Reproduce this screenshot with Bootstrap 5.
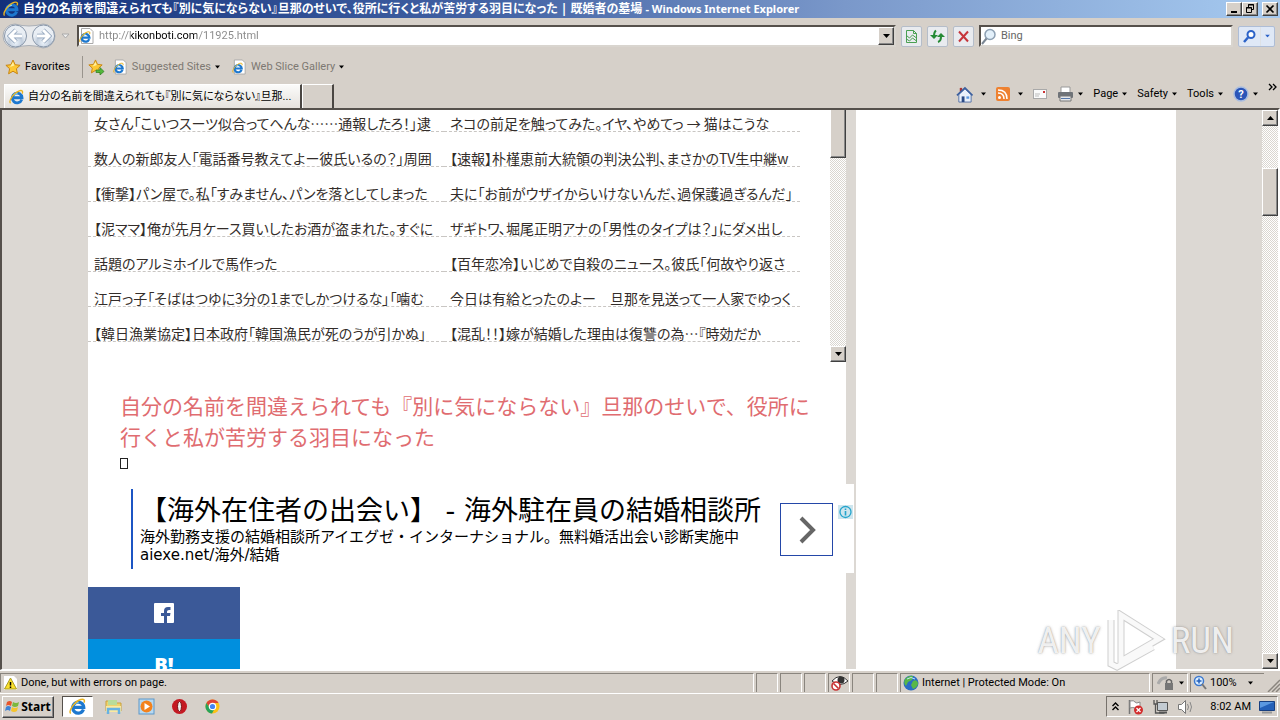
<!DOCTYPE html>
<html lang="ja">
<head>
<meta charset="utf-8">
<meta name="viewport" content="width=device-width, initial-scale=1">
<title>自分の名前を間違えられても『別に気にならない』旦那のせいで、役所に行くと私が苦労する羽目になった | 既婚者の墓場</title>
<link href="https://cdn.jsdelivr.net/npm/bootstrap@5.3.0/dist/css/bootstrap.min.css" rel="stylesheet">
<style>
:root{--face:#d6d0c9;--page:#dcd8d3;--ui:Roboto,"Noto Sans CJK JP",sans-serif}
body{font:11px/16px var(--ui);color:#000;background:var(--face)}
button{font:inherit;color:inherit;background:none;border:0;padding:0;display:inline-flex;align-items:center;justify-content:center}
a{color:inherit;text-decoration:none}
svg{display:block;flex:none}
.kana{font-feature-settings:"palt"}
.titlebar{height:18px;padding:0 2px 0 3px;color:#fff;font:700 12px/18px "Noto Sans","Noto Sans CJK JP",sans-serif;background:linear-gradient(90deg,#12307a,#4262a4 38%,#7a98ca 66%,#a6caf0)}
.titlebar .latin{font-size:11px}
.raised{background:var(--face);border:1px solid;border-color:#fff #404040 #404040 #fff;box-shadow:inset -1px -1px #888}
.winbtn{width:16px;height:14px}
.sunken{border:1px solid;border-color:#77726c #fff #fff #77726c}
.navrow{height:36px;padding:0 5px 0 2px;gap:5px}
.tools{gap:5px}
.field{height:22px;background:#fff;border:2px solid;border-color:#55504b #d9d5cf #d9d5cf #55504b}
.field input{border:0;outline:0;background:none;padding:0;min-width:0;font:inherit}
.addr-input{color:transparent!important;background:linear-gradient(90deg,#888 32px,#000 32px 98px,#888 98px) text!important;-webkit-background-clip:text!important}
.find input{color:#666}
.find input::placeholder{color:#666;opacity:1}
.dropbtn{width:16px;height:18px}
.toolbtn{width:21px;height:21px;background:#e9ebef;border:1px solid #b5bdc9;border-radius:2px}
.findbtn{height:21px;background:#dfe8f6;border:1px solid #aebdd6;border-radius:2px}
.favrow{height:26px;padding:0 5px}
.divider{width:1px;height:22px;margin:0 5px 0 12px;background:#99948d}
.muted{color:#7d7872}
.tabrow{height:28px;padding:0 3px 0 4px}
.tab-on{width:298px;height:25px;padding:0 4px;background:linear-gradient(#fbfbfa,#e6e2dd);border:1px solid #fff;border-right:2px solid #4a4642;justify-content:flex-start}
.tab-new{width:32px;height:25px;border:1px solid #fff;border-right:2px solid #4a4642;border-bottom:0}
.cmds{gap:10px}
.view{border:2px solid;border-color:#55504b #fff #fff #55504b;background:var(--page);border-bottom-width:1px}
.wrap{max-width:1088px;gap:10px}
.side{width:320px;background:#fff}
.feed{height:252px}
.feed ul{width:712px;padding-bottom:20px}
.feed li{height:35px;width:50%;padding:18px 0 0 6px;line-height:16px;font-family:"Noto Sans CJK JP",sans-serif;font-size:14px;color:#332d2a;border-bottom:1px dashed #c9c6c3;white-space:nowrap}
.track{width:16px;background:repeating-conic-gradient(#fff 0 25%,#dad6d0 0 50%) 0 0/2px 2px}
.thumb{width:16px;height:48px}
.gap-top{height:42px}
.arrow{width:16px;height:16px}
.post-head{padding:28px 0 0 32px}
.post-head h1{font:400 21px/31px "Noto Sans CJK JP",sans-serif;color:#e06c70;margin:0;width:700px}
.tofu{width:8px;height:11px;border:1px solid #222;margin-top:6px}
.promo{height:89px;margin:15px -8px 14px 32px;padding:5px 1px 0 11px;background:#fff}
.promo-body{border-left:2px solid #1c55c4;height:80px;padding:5px 0 0 7px;font:15px/18px "DejaVu Sans","Noto Sans CJK JP",sans-serif}
.promo-title{font-size:27px;line-height:34px}
.promo-go{width:53px;height:53px;border:1px solid #2447a8;margin:14px 5px 0 0}
.share a{width:152px;height:52px;display:flex;align-items:center;justify-content:center}
.fb{background:#3b5998}
.hb{background:#008fde;color:#fff;font:800 20px/20px "Open Sans",sans-serif}
.statusbar{height:24px;border-top:1px solid #fff;padding:2px 0 1px;border-bottom:1px solid #fff}
.pane{border-left:1px solid #8a857e;border-top:1px solid #8a857e;border-right:1px solid #fff;padding:0 2px;margin-right:2px;gap:3px}
.pane-s{width:22px}
.taskbar{height:26px;padding:1px 2px 2px}
.startbtn{width:52px;height:22px;font:700 12px/16px "Noto Sans",sans-serif;gap:1px}
.task-on{width:31px;height:21px;background:#fff;border:1px solid;border-color:#55504b #fff #fff #55504b}
.tray{height:21px;padding:0 2px 0 5px}
.watermark{right:46px;bottom:48px;gap:4px;color:#fffd;font:37px/60px "Roboto Condensed","Liberation Sans Narrow","Liberation Sans",sans-serif;text-shadow:0 0 3px #888a,0 0 1px #888a;pointer-events:none}
</style>
</head>
<body class="vh-100 d-flex flex-column overflow-hidden">
<svg width="0" height="0" class="position-absolute" aria-hidden="true">
 <defs>
  <symbol id="ie" viewBox="0 0 16 16"><path d="M13.600 10.800A5.200 5.200 0 1 1 13.900 8.800H5" fill="none" stroke="#1d78cf" stroke-width="3"/><path d="M4 6.600Q6 4.200 9 4.400" fill="none" stroke="#7fd0f8" stroke-width="1.200"/><path d="M1.600 14.600C-.8 12.400 5 3.400 11 1.400c3-1 4.200.6 3 3" fill="none" stroke="#e9b320" stroke-width="1.400"/></symbol>
  <symbol id="iepage" viewBox="0 0 16 16"><path d="M2.500.5h8.500l3 3v12h-11.500z" fill="#fff" stroke="#aaa"/><use href="#ie" x="0" y="3" width="12" height="12"/></symbol>
  <symbol id="dn" viewBox="0 0 7 4"><path d="M0 0h7L3.500 4z" fill="currentColor"/></symbol>
  <symbol id="star" viewBox="0 0 16 16"><path d="M8 1l2.100 4.700 5 .6-3.700 3.400 1 5.100L8 12.200l-4.400 2.600 1-5.100L.9 6.300l5-.6z" fill="#fdc835" stroke="#c98512"/><path d="M8 3l1.300 3.500L5 8z" fill="#fff0a0"/></symbol>
 </defs>
</svg>

<header>
 <div class="titlebar d-flex align-items-center">
  <svg width="16" height="16"><use href="#ie"/></svg>
  <span class="kana flex-grow-1 text-nowrap overflow-hidden ps-1">自分の名前を間違えられても『別に気にならない』旦那のせいで、役所に行くと私が苦労する羽目になった | 既婚者の墓場 <span class="latin">- Windows Internet Explorer</span></span>
  <button class="winbtn raised" aria-label="Minimize"><svg width="10" height="10"><path d="M2 8h6" stroke="#000" stroke-width="2"/></svg></button>
  <button class="winbtn raised me-1" aria-label="Restore"><svg width="10" height="10"><path d="M3.500 3V.5h5v5H7M3 1h6M1.500 3.500h5v5h-5zM1 4h6" fill="none" stroke="#000"/></svg></button>
  <button class="winbtn raised" aria-label="Close"><svg width="10" height="10"><path d="M1.500 1.500l7 7m0-7l-7 7" stroke="#000" stroke-width="1.700"/></svg></button>
 </div>

 <div class="navrow d-flex align-items-center">
  <svg width="70" height="28" viewBox="0 0 70 28" role="img" aria-label="Back and forward">
   <defs><radialGradient id="orb" cy=".8"><stop offset="0" stop-color="#edf4fb"/><stop offset=".6" stop-color="#c2cedd"/><stop offset="1" stop-color="#e9eef4"/></radialGradient></defs>
   <path d="M13 2Q27 6 41 2a12 12 0 0 1 0 24Q27 21 13 26a12 12 0 0 1 0-24z" fill="#e8eaed" stroke="#aaafb6"/>
   <circle cx="13.500" cy="14" r="11" fill="url(#orb)" stroke="#8795a8"/><circle cx="41.500" cy="14" r="11" fill="url(#orb)" stroke="#8795a8"/>
   <path d="M20 14H8m6-6l-6 6 6 6" fill="none" stroke="#8b9fb8" stroke-width="4.500"/><path d="M20 14H8m6-6l-6 6 6 6" fill="none" stroke="#fff" stroke-width="3"/>
   <path d="M35 14h12m-6-6l6 6-6 6" fill="none" stroke="#8b9fb8" stroke-width="4.500"/><path d="M35 14h12m-6-6l6 6-6 6" fill="none" stroke="#fff" stroke-width="3"/>
   <path d="M60 12h7l-3.500 4z" fill="#eee" stroke="#aaa"/>
  </svg>
  <label class="field d-flex align-items-center flex-grow-1">
   <svg width="16" height="16"><use href="#iepage"/></svg>
   <input class="addr-input flex-grow-1 ms-1" aria-label="Address" value="http://kikonboti.com/11925.html">
   <button class="dropbtn raised" aria-label="Show addresses"><svg width="7" height="4"><use href="#dn"/></svg></button>
  </label>
  <div class="tools d-flex">
   <button class="toolbtn" aria-label="Compatibility view"><svg width="15" height="15"><path d="M2.500 1.500h7l3 3v9h-10zM9.500 1.500v3h3M2.500 6.500l3 2.500 3-3 4 3M2.500 10l3 2 3-3 4 3" fill="none" stroke="#4aa052"/></svg></button>
   <button class="toolbtn" aria-label="Refresh"><svg width="15" height="15"><path d="M6 1.500Q4 3 4 7" fill="none" stroke="#268a35" stroke-width="2"/><path d="M0 6h8L4 10zM7 8h8L11 4z" fill="#268a35"/><path d="M11 8q0 4-3 5" fill="none" stroke="#268a35" stroke-width="2"/></svg></button>
   <button class="toolbtn" aria-label="Stop"><svg width="15" height="15"><path d="M3 2.500l9 10M12 2.500l-9 10" stroke="#c6353b" stroke-width="2"/></svg></button>
  </div>
  <label class="field find d-flex align-items-center">
   <svg class="me-1" width="16" height="17"><circle cx="9" cy="6.500" r="5" fill="#e3f0fa" stroke="#8da0b3" stroke-width="1.500"/><path d="M5.500 10.500L1 16" stroke="#7b8794" stroke-width="2"/></svg>
   <input style="width:230px" aria-label="Search" placeholder="Bing">
  </label>
  <div class="findbtn d-flex">
   <button class="px-1" aria-label="Search"><svg width="13" height="15"><circle cx="8" cy="5.500" r="3.500" fill="#fff" stroke="#2b62c8" stroke-width="2"/><path d="M5 8.500L1 13" stroke="#2b62c8" stroke-width="2.500"/></svg></button>
   <button class="border-start px-1" style="color:#2b62c8" aria-label="Search options"><svg width="5" height="4" viewBox="0 0 7 4"><use href="#dn"/></svg></button>
  </div>
 </div>

 <nav class="favrow d-flex align-items-center">
  <button><svg class="me-1" width="16" height="16"><use href="#star"/></svg>Favorites</button>
  <span class="divider"></span>
  <button aria-label="Add to favorites"><svg width="17" height="16"><use href="#star" width="15" height="15"/><path d="M8 11h4V8.500l4 4-4 3.500v-2.500H8z" fill="#54b83c" stroke="#2d7c1f" stroke-width=".7"/></svg></button>
  <button class="ms-2"><svg class="me-1" width="15" height="16"><use href="#iepage"/></svg><span class="muted">Suggested Sites</span><svg class="ms-1" width="5" height="4"><use href="#dn"/></svg></button>
  <button class="ms-2 ps-1"><svg class="me-1" width="15" height="16"><use href="#iepage"/></svg><span class="muted">Web Slice Gallery</span><svg class="ms-1" width="5" height="4"><use href="#dn"/></svg></button>
 </nav>

 <div class="tabrow d-flex">
  <button class="tab-on kana mt-1"><svg class="me-1" width="15" height="16"><use href="#ie"/></svg><span class="text-nowrap">自分の名前を間違えられても『別に気にならない』旦那...</span></button>
  <button class="tab-new mt-1" aria-label="New tab"></button>
  <div class="cmds d-flex align-items-center ms-auto">
   <button aria-label="Home"><svg width="17" height="17" viewBox="0 0 18 18"><path d="M4 2h2.500v4H4z" fill="#a33"/><path d="M3 9l6.500-6L16 9v8H3z" fill="#e9f0fa" stroke="#5573a8"/><path d="M1 10l8.500-8 8 8" fill="none" stroke="#3c5f9e" stroke-width="1.800"/><path d="M6 11h3v6H6z" fill="#2b4a85"/><path d="M11 11h3v2.500h-3z" fill="#5e9ae0"/></svg><svg class="ms-2" width="5" height="4"><use href="#dn"/></svg></button>
   <button aria-label="Feeds"><svg width="14" height="14" viewBox="0 0 14 14"><rect width="14" height="14" rx="2" fill="#ee8130"/><circle cx="3.500" cy="10.500" r="1.500" fill="#fff"/><path d="M2 6q6 0 6 6M2 3q9 0 9 9" fill="none" stroke="#fff" stroke-width="1.500"/></svg><svg class="ms-2" width="5" height="4"><use href="#dn"/></svg></button>
   <button aria-label="Read mail"><svg width="14" height="11"><rect x=".5" y=".5" width="13" height="9" fill="#fafafa" stroke="#a9a9a9"/><path d="M2 5h5M2 7h4" stroke="#bbb"/><path d="M10 2h2v2h-2z" fill="#c33"/></svg></button>
   <button aria-label="Print"><svg width="17" height="16"><path d="M4 1h9v6H4z" fill="#fff" stroke="#999"/><rect x="1" y="6" width="15" height="6" rx="1" fill="#6f7378"/><path d="M3 10h11v5H3z" fill="#e5e7ea" stroke="#777"/><path d="M4 12.500h9" stroke="#57a"/></svg><svg class="ms-1" width="5" height="4"><use href="#dn"/></svg></button>
   <button>Page<svg class="ms-1" width="5" height="4"><use href="#dn"/></svg></button>
   <button>Safety<svg class="ms-1" width="5" height="4"><use href="#dn"/></svg></button>
   <button>Tools<svg class="ms-1" width="5" height="4"><use href="#dn"/></svg></button>
   <button aria-label="Help"><svg width="16" height="16"><circle cx="8" cy="8" r="7" fill="#2b55b8" stroke="#a9bde0" stroke-width="1.500"/><text x="8" y="12" text-anchor="middle" font-size="11" font-weight="700" fill="#fff">?</text></svg><svg class="ms-1" width="5" height="4"><use href="#dn"/></svg></button>
   <button class="align-self-start" aria-label="More"><svg width="9" height="14"><path d="M1 4l3 3-3 3M5 4l3 3-3 3" fill="none" stroke="#000" stroke-width="1.300"/></svg></button>
  </div>
 </div>
</header>

<main class="view d-flex flex-grow-1 overflow-hidden">
 <div class="flex-grow-1 overflow-hidden">
  <div class="wrap d-flex mx-auto h-100">
   <article class="flex-grow-1 bg-white">
    <section class="feed d-flex overflow-hidden">
     <div class="flex-grow-1 d-flex flex-column justify-content-end">
      <ul class="kana list-unstyled d-flex flex-wrap mb-0">
       <li><a href="#">女さん「こいつスーツ似合ってへんな……通報したろ！」逮</a></li><li><a href="#">ネコの前足を触ってみた。イヤ、やめてっ → 猫はこうな</a></li>
       <li><a href="#">数人の新郎友人「電話番号教えてよー彼氏いるの？」周囲</a></li><li><a href="#">【速報】朴槿恵前大統領の判決公判、まさかのTV生中継w</a></li>
       <li><a href="#">【衝撃】パン屋で。私「すみません、パンを落としてしまった</a></li><li><a href="#">夫に「お前がウザイからいけないんだ、過保護過ぎるんだ」</a></li>
       <li><a href="#">【泥ママ】俺が先月ケース買いしたお酒が盗まれた。すぐに</a></li><li><a href="#">ザギトワ、堀尾正明アナの「男性のタイプは？」にダメ出し</a></li>
       <li><a href="#">話題のアルミホイルで馬作った</a></li><li><a href="#">【百年恋冷】いじめで自殺のニュース。彼氏「何故やり返さ</a></li>
       <li><a href="#">江戸っ子「そばはつゆに3分の1までしかつけるな」「噛む</a></li><li><a href="#">今日は有給とったのよー　旦那を見送って一人家でゆっく</a></li>
       <li><a href="#">【韓日漁業協定】日本政府「韓国漁民が死のうが引かぬ」</a></li><li><a href="#">【混乱！！】嫁が結婚した理由は復讐の為…『時効だか</a></li>
      </ul>
     </div>
     <div class="track d-flex flex-column justify-content-between">
      <div class="thumb raised border-top-0"></div>
      <button class="arrow raised" aria-label="Scroll list down"><svg width="7" height="4"><use href="#dn"/></svg></button>
     </div>
    </section>
    <div class="post-head">
     <h1>自分の名前を間違えられても『別に気にならない』旦那のせいで、役所に行くと私が苦労する羽目になった</h1>
     <div class="tofu"></div>
    </div>
    <aside class="promo d-flex position-relative">
     <div class="promo-body flex-grow-1">
      <div class="promo-title">【海外在住者の出会い】 - 海外駐在員の結婚相談所</div>
      <div>海外勤務支援の結婚相談所アイエグゼ・インターナショナル。無料婚活出会い診断実施中</div>
      <div>aiexe.net/海外/結婚</div>
     </div>
     <button class="promo-go" aria-label="Open"><svg width="20" height="30"><path d="M4 3l12 12L4 27" fill="none" stroke="#666" stroke-width="4"/></svg></button>
     <svg class="mt-3" width="15" height="14"><rect width="15" height="14" fill="#cfe6ee"/><circle cx="7.500" cy="7" r="5.500" fill="none" stroke="#25a4cc" stroke-width="1.300"/><path d="M7.500 3.500v1.500M7.500 6v4.500" stroke="#25a4cc" stroke-width="1.600"/></svg>
    </aside>
    <div class="share">
     <a class="fb" href="#" aria-label="Facebook"><svg width="20" height="20"><rect width="20" height="20" rx="1" fill="#fff"/><path d="M10 20v-7H7v-3h3V8q0-4 4-4h2.500v3H15Q13 7 13 8.500V10h3.500l-.5 3h-3v7z" fill="#3b5998"/></svg></a>
     <a class="hb" href="#">B!</a>
    </div>
   </article>
   <div class="side"></div>
  </div>
 </div>
 <div class="track d-flex flex-column">
  <button class="arrow raised" aria-label="Scroll up"><svg width="7" height="4" viewBox="0 0 7 4"><path d="M0 4h7L3.500 0z"/></svg></button>
  <div class="gap-top"></div>
  <div class="thumb raised mb-auto"></div>
  <button class="arrow raised" aria-label="Scroll down"><svg width="7" height="4"><use href="#dn"/></svg></button>
 </div>
</main>

<footer>
 <div class="statusbar d-flex align-items-stretch">
  <div class="pane flex-grow-1 d-flex align-items-center"><svg width="15" height="16"><path d="M1 1h10l3 3v11H1z" fill="#fff"/><path d="M7.500 3l6 11h-12z" fill="#fbe02c" stroke="#a89a20"/><path d="M7.500 7v3.500M7.500 11.500v1.500" stroke="#000" stroke-width="1.500"/></svg>Done, but with errors on page.</div>
  <div class="pane pane-s"></div><div class="pane pane-s"></div><div class="pane pane-s"></div>
  <div class="pane pane-s"><svg width="18" height="17"><path d="M1 7q8-9 16 0-8 7-16 0z" fill="#fff" stroke="#333"/><circle cx="10" cy="6" r="3.500" fill="#333"/><circle cx="5" cy="12" r="4" fill="#fff" stroke="#c83232" stroke-width="1.600"/><path d="M2.500 9.500l5 5" stroke="#c83232" stroke-width="1.600"/></svg></div>
  <div class="pane pane-s"></div><div class="pane pane-s"></div>
  <div class="pane d-flex align-items-center" style="width:250px"><svg width="16" height="16"><circle cx="8" cy="8" r="7.500" fill="#2a6cc4"/><path d="M2 4q4-4 8-3l-1 4-4 2-2 4Q0 8 2 4zM10 6q4-2 5 2 0 4-5 6l-2-4z" fill="#58b847"/><path d="M4 4q4-3 8 0" fill="none" stroke="#bfe4ff"/></svg>Internet | Protected Mode: On</div>
  <button class="pane" style="width:36px" aria-label="Privacy"><svg width="19" height="16"><path d="M1 9q3-7 9-6" fill="none" stroke="#aaa" stroke-width="3"/><rect x="8" y="8" width="8" height="7" fill="#777"/><path d="M9.500 8V6q2.500-3 5 0v2" fill="none" stroke="#666" stroke-width="1.500"/></svg><svg width="5" height="4"><use href="#dn"/></svg></button>
  <button class="pane border-end-0 justify-content-start" style="width:74px"><svg width="14" height="16"><circle cx="6" cy="6" r="4.500" fill="#dcefff" stroke="#3b78cf" stroke-width="1.500"/><path d="M6 3.500v5M3.500 6h5" stroke="#2460bb" stroke-width="1.500"/><path d="M9 9l4 5" stroke="#777" stroke-width="2"/></svg>100%<svg class="ms-2" width="5" height="4"><use href="#dn"/></svg></button>
  <svg class="align-self-end" width="14" height="14"><path d="M2 14L14 2M6 14l8-8M10 14l4-4" stroke="#8a857e" stroke-width="1.500"/></svg>
 </div>
 <div class="taskbar d-flex align-items-center">
  <button class="startbtn raised"><svg width="15" height="15"><path d="M2 3q3-2 5 0L6 7Q3 5 1 7z" fill="#e8552b"/><path d="M8 3q3 2 6 0l-1 4q-3 2-6 0z" fill="#7cb83c"/><path d="M1 8q2-2 5 0l-1 4q-2-2-5 0z" fill="#3f83d6"/><path d="M7 8q3 2 6 0l-1 4q-3 2-6 0z" fill="#f6c42c"/></svg>Start</button>
  <button class="task-on ms-2" aria-label="Internet Explorer"><svg width="17" height="17"><use href="#ie"/></svg></button>
  <div class="d-flex gap-3 ms-2 ps-1">
   <button aria-label="Explorer"><svg width="17" height="17"><path d="M1 3h6l1 2h8v8H1z" fill="#f0d36c" stroke="#c9a13c"/><path d="M3 2h9v5H3z" fill="#b9dc9a"/><path d="M1 8h15v6H1z" fill="#fae9a0"/><path d="M3 16v-5h11v5" fill="none" stroke="#67b2e2" stroke-width="2.500"/></svg></button>
   <button aria-label="Media Player"><svg width="17" height="17"><rect x="1" y="1" width="15" height="15" fill="#b7d9f1" stroke="#5d97c9"/><circle cx="8.500" cy="8.500" r="6" fill="#f3821d"/><path d="M6.500 5l5.500 3.500-5.500 3.500z" fill="#fff"/></svg></button>
   <button aria-label="Opera"><svg width="17" height="17"><circle cx="8.500" cy="8.500" r="7.500" fill="#c41922"/><ellipse cx="8.500" cy="8.500" rx="2" ry="5" fill="#eee" stroke="#7c0b10"/></svg></button>
   <button aria-label="Chrome"><svg width="17" height="17" viewBox="0 0 17 17"><circle cx="8.500" cy="8.500" r="7" fill="#fbc116"/><path d="M2.400 5A7 7 0 0 1 14.600 5H8.500L6 10z" fill="#de4336"/><path d="M2.400 5A7 7 0 0 0 8 15.500l3-5.500-5 0z" fill="#26a35a"/><circle cx="8.500" cy="8.500" r="3.200" fill="#4285f4" stroke="#fff" stroke-width="1.200"/></svg></button>
  </div>
  <div class="tray sunken d-flex align-items-center ms-auto gap-2">
   <svg width="7" height="11"><path d="M.5 5l3-3 3 3M.5 9l3-3 3 3" fill="none" stroke="#000" stroke-width="1.400"/></svg>
   <svg width="17" height="16"><path d="M2.500 1v14" stroke="#777" stroke-width="1.500"/><path d="M3 2q4-1 5 1t5 0v6q-3 1-5 0t-5 0z" fill="#fff" stroke="#888"/><circle cx="11.500" cy="11" r="4.500" fill="#d22d2d"/><path d="M9.500 9l4 4m0-4l-4 4" stroke="#fff" stroke-width="1.300"/></svg>
   <svg width="17" height="16"><path d="M5.500 3.500h10v8h-10z" fill="#c3cbd2" stroke="#555"/><path d="M2 1v4h3V1M3.500 5v9h9" fill="none" stroke="#555" stroke-width="1.300"/><path d="M7 13.500h8" stroke="#555" stroke-width="2"/></svg>
   <svg width="17" height="16"><path d="M1.500 5.500h3l4-4v13l-4-4h-3z" fill="#fff" stroke="#777"/><path d="M10.500 5q2 3 0 6M13 3q3 5 0 10" fill="none" stroke="#888"/></svg>
   <time class="ms-1 ps-1">8:02 AM</time>
   <svg width="16" height="15"><path d="M.5 2.500h15v9H.5z" fill="#2460b8" stroke="#173f80"/><path d="M1 3h14L1 9z" fill="#5b98e0"/><path d="M3 13.500h10" stroke="#999" stroke-width="2"/></svg>
  </div>
 </div>
</footer>

<div class="watermark position-absolute d-flex align-items-center" aria-hidden="true">
 <span>ANY</span>
 <svg width="62" height="62" viewBox="0 0 62 62" fill="none"><path d="M16 5v46l38-22zM6 10v44l6 3 36-20" stroke="#8886" stroke-width="7"/><path d="M16 5v46l38-22zM6 10v44l6 3 36-20" stroke="#fffd" stroke-width="5"/></svg>
 <span>RUN</span>
</div>
<script src="https://cdn.jsdelivr.net/npm/bootstrap@5.3.0/dist/js/bootstrap.bundle.min.js"></script>
</body>
</html>
